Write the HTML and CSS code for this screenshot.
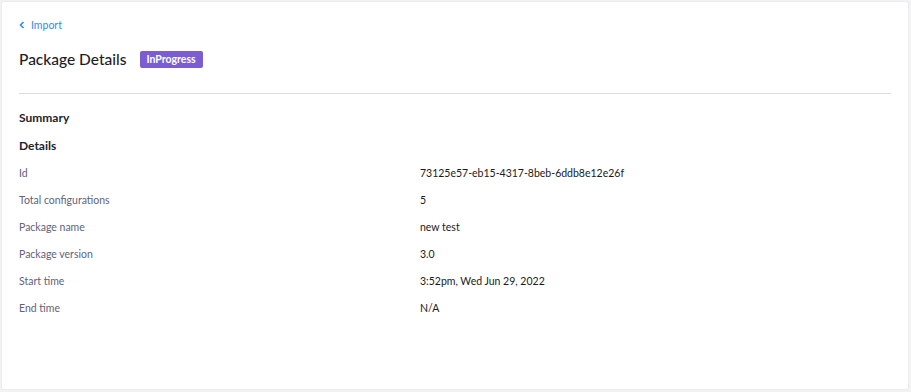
FILE: index.html
```html
<!DOCTYPE html>
<html>
<head>
<meta charset="utf-8">
<link rel="stylesheet" href="styles.css">
</head>
<body>
<div class="card">
  <a class="back" href="#"><svg class="chev" width="6" height="8" viewBox="0 0 6 8"><path d="M4.5 1 L1.5 4 L4.5 7" fill="none" stroke="currentColor" stroke-width="1.6"/></svg>Import</a>
  <div class="title-row">
    <h1 class="title">Package Details</h1>
    <span class="badge">InProgress</span>
  </div>
  <hr class="divider">
  <h2 class="section">Summary</h2>
  <h3 class="section sub">Details</h3>
  <div class="grid">
    <div class="label">Id</div><div class="value">73125e57-eb15-4317-8beb-6ddb8e12e26f</div>
    <div class="label">Total configurations</div><div class="value">5</div>
    <div class="label">Package name</div><div class="value">new test</div>
    <div class="label">Package version</div><div class="value">3.0</div>
    <div class="label">Start time</div><div class="value">3:52pm, Wed Jun 29, 2022</div>
    <div class="label">End time</div><div class="value">N/A</div>
  </div>
</div>
</body>
</html>
```
FILE: styles.css
```css
html, body { margin: 0; padding: 0; }
body {
  background: #f2f2f4;
  font-family: Lato, "Open Sans", sans-serif;
  width: 911px;
  height: 392px;
  padding: 1px;
  box-sizing: border-box;
}
.card {
  background: #fff;
  border-radius: 3px;
  height: 389px;
  width: 908px;
  box-sizing: border-box;
  padding: 11px 17px 0 17px;
  border: 1px solid #ececef;
}
.back {
  display: inline-flex;
  align-items: center;
  gap: 6px;
  color: #2f8cf0;
  text-decoration: none;
  font-size: 10.5px;
  height: 14px;
  margin-left: 0;
}
.chev { display: block; }
.title-row {
  display: flex;
  align-items: center;
  margin-top: 17px;
  gap: 13px;
}
.title {
  margin: 0;
  font-size: 15.5px;
  font-weight: 500;
  color: #1d1d26;
  line-height: 20px;
}
.badge {
  background: #7c5dd1;
  color: #fff;
  font-size: 10.5px;
  font-weight: 700;
  padding: 0 7px;
  height: 17px;
  line-height: 17px;
  border-radius: 2px;
}
.divider {
  border: 0;
  border-top: 1px solid #dcdbe3;
  margin: 24px 0 0 0;
}
.section {
  margin: 16px 0 0 0;
  font-size: 12px;
  font-weight: 700;
  color: #22222c;
  line-height: 16px;
}
.section.sub { margin-top: 12px; }
.grid {
  display: grid;
  grid-template-columns: 401px 1fr;
  grid-auto-rows: 27px;
  margin-top: 5px;
  align-items: center;
  font-size: 10.5px;
}
.label { color: #62627a; }
.value { color: #1a1a22; }
```
